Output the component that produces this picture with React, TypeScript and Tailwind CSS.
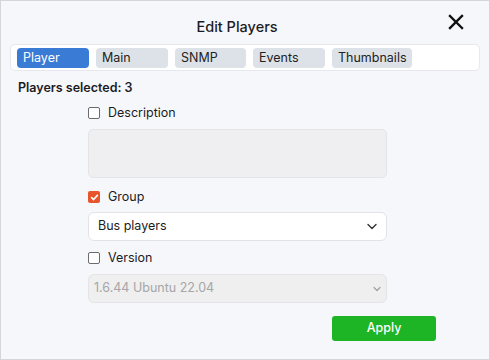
import React from "react";

function Checkbox({ checked }: { checked?: boolean }) {
  if (checked) {
    return (
      <span className="flex h-[12px] w-[12px] items-center justify-center rounded-[2px] bg-[#e8552c]">
        <svg width="9" height="9" viewBox="0 0 10 10">
          <path d="M1.8 5.2 L4 7.3 L8.2 2.6" fill="none" stroke="white" strokeWidth="1.8" strokeLinecap="round" strokeLinejoin="round" />
        </svg>
      </span>
    );
  }
  return <span className="block h-[12px] w-[12px] rounded-[2px] border border-[#6b6b70] bg-white" />;
}

export default function App() {
  const tabs = [
    { label: "Player", w: "w-[72px]", active: true },
    { label: "Main", w: "w-[72px]" },
    { label: "SNMP", w: "w-[71px]" },
    { label: "Events", w: "w-[72px]" },
    { label: "Thumbnails", w: "w-[80px]" },
  ];
  return (
    <div
      className="relative flex h-[360px] w-[490px] flex-col border border-[#d6d6d9] bg-[#f6f7fb] text-[#1c1c1e]"
      style={{ fontFamily: "Inter, 'Noto Sans', sans-serif" }}
    >
      <div className="pr-[16px] pt-[16px] text-center text-[14.5px] font-medium leading-[20px]">Edit Players</div>
      <button className="absolute right-[25px] top-[13px] flex h-[16px] w-[16px] items-center justify-center">
        <svg width="16" height="16" viewBox="0 0 16 16">
          <path d="M2 2 L14 14 M14 2 L2 14" stroke="#111" strokeWidth="2.4" strokeLinecap="square" />
        </svg>
      </button>
      <div className="mx-[9px] mt-[7px] flex h-[27px] items-center gap-[7px] rounded-[5px] border border-[#e6e8ee] bg-white pl-[6px]">
        {tabs.map((t) => (
          <div
            key={t.label}
            className={`${t.w} flex h-[20px] items-center rounded-[4px] pl-[6px] text-[12.5px] leading-[16px] ${
              t.active ? "bg-[#3a7bd5] text-white" : "bg-[#dde2e8] text-[#222]"
            }`}
          >
            {t.label}
          </div>
        ))}
      </div>
      <div className="mt-[9px] pl-[17px] text-[12.5px] font-semibold leading-[16px]">Players selected: 3</div>
      <div className="ml-[87px] flex w-[299px] flex-col">
        <label className="mt-[9px] flex h-[16px] items-center gap-[8px] text-[12.5px] leading-[16px]">
          <Checkbox />
          <span>Description</span>
        </label>
        <div className="mt-[8px] h-[49px] rounded-[5px] border border-[#e4e4e7] bg-[#efeff1]" />
        <label className="mt-[11px] flex h-[16px] items-center gap-[8px] text-[12.5px] leading-[16px]">
          <Checkbox checked />
          <span>Group</span>
        </label>
        <div className="mt-[7px] flex h-[29px] items-center justify-between rounded-[6px] border border-[#e2e3e8] bg-white pl-[9px] pr-[9px] text-[12.5px]">
          <span>Bus players</span>
          <svg width="10" height="7" viewBox="0 0 10 7">
            <path d="M1 1.5 L5 5.5 L9 1.5" fill="none" stroke="#333" strokeWidth="1.4" strokeLinecap="round" strokeLinejoin="round" />
          </svg>
        </div>
        <label className="mt-[9px] flex h-[16px] items-center gap-[8px] text-[12.5px] leading-[16px]">
          <Checkbox />
          <span>Version</span>
        </label>
        <div className="mt-[8px] flex h-[29px] items-center justify-between rounded-[6px] border border-[#e4e4e6] bg-[#efefef] pl-[5px] pr-[5px] text-[12.5px] text-[#a6a6a8]">
          <span>1.6.44 Ubuntu 22.04</span>
          <svg width="8" height="6" viewBox="0 0 8 6">
            <path d="M1 1.5 L4 4.5 L7 1.5" fill="none" stroke="#a0a0a0" strokeWidth="1.2" strokeLinecap="round" strokeLinejoin="round" />
          </svg>
        </div>
      </div>
      <div className="mt-[13px] flex justify-end pr-[53px]">
        <button className="flex h-[25px] w-[104px] items-center justify-center rounded-[3px] bg-[#1db425] text-[12.5px] font-medium text-white">
          Apply
        </button>
      </div>
    </div>
  );
}
